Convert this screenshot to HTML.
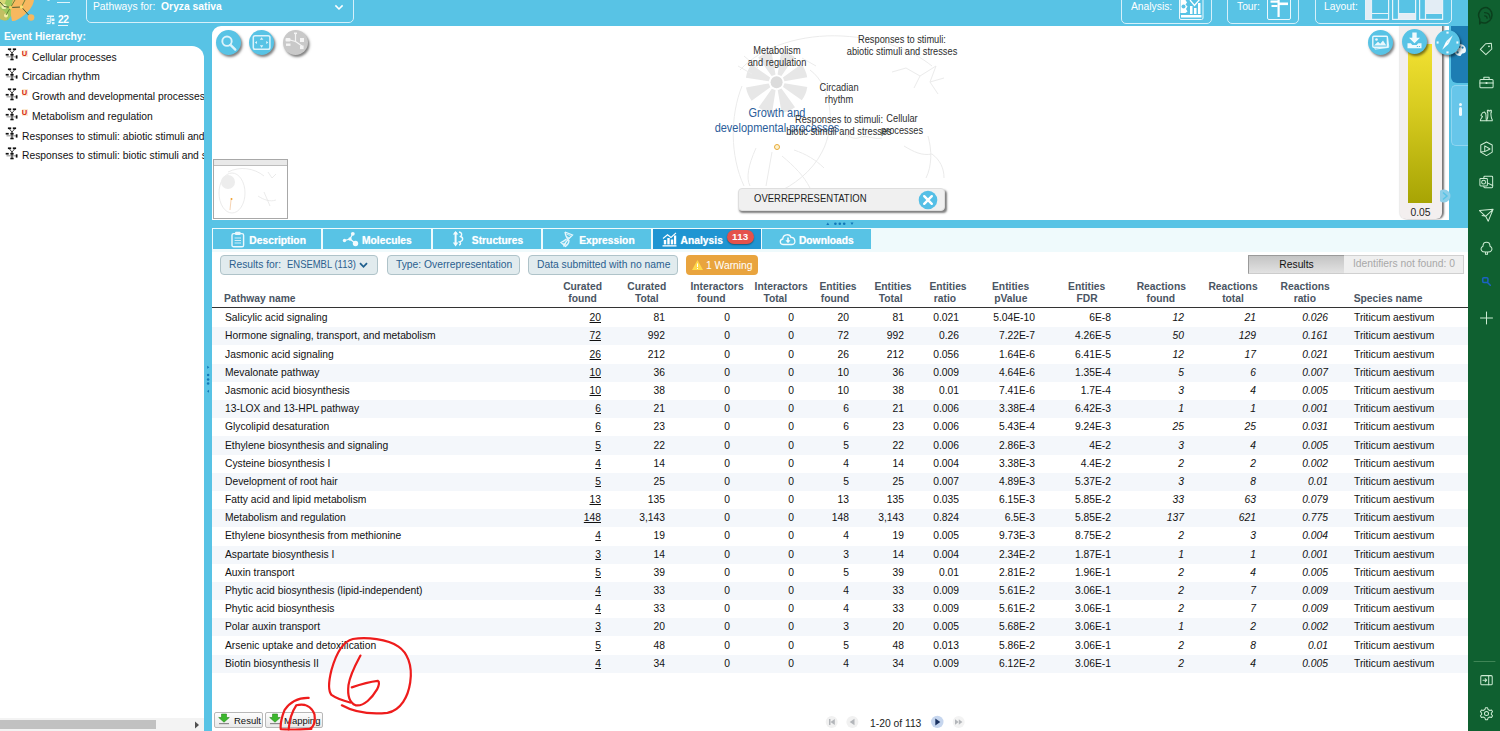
<!DOCTYPE html>
<html><head><meta charset="utf-8"><title>Pathway Browser</title>
<style>
*{box-sizing:border-box;margin:0;padding:0}
html,body{width:1500px;height:731px;overflow:hidden;background:#58C3E5;font-family:"Liberation Sans",Arial,sans-serif;font-size:11px;color:#111}
.abs{position:absolute}
#app{position:relative;width:1500px;height:731px;overflow:hidden;background:#58C3E5}
/* top bar */
.tbox{position:absolute;border:1px solid #d6f0fa;border-radius:5px;color:#fff;font-size:11px}
/* left panel */
#left{position:absolute;left:0;top:46px;width:204px;height:685px;background:#fff;border-top-right-radius:12px;overflow:hidden}
.hi{position:absolute;left:22px;white-space:nowrap;font-size:10.3px;color:#111;line-height:14px}
.hi.u{left:32px}
.ub{position:absolute;left:21.5px;font-size:7.5px;font-weight:bold;color:#d6240f;background:#fdebd3;line-height:7px;height:7px;width:6px;text-align:center;margin-top:-.7px}
/* viewport */
#view{position:absolute;left:212px;top:26px;width:1237px;height:194px;background:#fff;border-top-left-radius:9px;overflow:hidden}
.cbtn{position:absolute;width:25px;height:25px;border-radius:50%;background:#58C3E5;box-shadow:1.5px 2px 2.5px rgba(0,0,0,.5)}
.lbl{position:absolute;font-size:9.25px;line-height:10.8px;text-align:center;color:#2e2e2e;white-space:nowrap;transform:translateX(-50%) scaleY(1.11);transform-origin:50% 0;margin-top:1.3px}
/* bottom panel */
#bottom{position:absolute;left:212px;top:227.5px;width:1256px;height:503.5px;background:#fff}
#tabbar{position:absolute;left:0;top:0.7px;width:1256px;height:23.8px;background:#effafc}
#bottom:before{content:'';position:absolute;left:0;top:0;width:1256px;height:1px;background:#58C3E5}
.tab{position:absolute;top:1.7px;height:20.1px;background:#58C3E5;color:#fff;font-weight:bold;font-size:10.3px;white-space:nowrap}
.tab span{position:absolute;top:6.1px;line-height:12px;text-shadow:0 0 1px rgba(255,255,255,.6)}
.tab.sel{background:#1f95d2}
.pill{position:absolute;top:27.3px;height:19.8px;border:1px solid #afc3c9;border-radius:4px;background:#e1ebee;color:#2b5f8f;font-size:10.3px;line-height:18px;padding:0 0 0 8px;white-space:nowrap}
table{position:absolute;left:0px;top:81.6px;border-collapse:collapse;table-layout:fixed;width:1256px}
td{height:18.2px;font-size:10.3px;line-height:18px;white-space:nowrap;text-align:right;color:#111;overflow:hidden;padding:0}
tr.odd td{background:#f4f7fb}
td.c0{text-align:left;padding-left:13px}
td.c13{text-align:left;padding-left:12px}
td.it{font-style:italic}
td.c1{padding-right:11px}td.c2{padding-right:11px}td.c3{padding-right:16px}td.c4{padding-right:18px}td.c5{padding-right:13px}td.c6{padding-right:14px}td.c7{padding-right:16px}td.c8{padding-right:15px}td.c9{padding-right:14px}td.c10{padding-right:13px}td.c11{padding-right:14px}td.c12{padding-right:14px}
.th.l{transform:none}
.th{position:absolute;font-weight:bold;font-size:10.3px;line-height:12px;color:#4a5563;text-align:center;white-space:nowrap;transform:translateX(-50%)}
.btn{position:absolute;top:484px;height:16.2px;border:1px solid #b8b8b8;border-radius:2px;background:linear-gradient(#fdfdfd,#e9e9e9);font-size:9.5px;color:#111}
.btn span{position:absolute;top:2.5px;line-height:12px}
/* right sidebar */
#side{position:absolute;left:1468px;top:0;width:32px;height:731px;background:#0f6030}
</style></head><body>
<div id="app">

<!-- top bar -->
<svg class="abs" style="left:0;top:0" width="40" height="26" viewBox="0 0 40 26">
  <path d="M0 0 H16 C15 8 12 16 8 20 C5 21 2 20 0 19Z" fill="#9ec95e"/>
  <path d="M0 9 C4 10 8 14 7 20 C4 21 2 20 0 19Z" fill="#c2bf62"/>
  <path d="M13 0 L34 0 C33 7 28 12 23 16 C19 19 15 21.500 12 21 C10 14 11 6 13 0Z" fill="#f7b85f"/>
  <path d="M0 0 H6 C5 4 3 6 0 7Z" fill="#d8d878"/>
  <circle cx="4" cy="6.500" r="2.600" fill="#eef2b0"/><circle cx="6" cy="15.500" r="2" fill="#f4f0a8"/>
  <path d="M0 2 L4 6.500 L10.500 7.500 L21.500 7 L29 15.500" fill="none" stroke="#4d5c30" stroke-width="1"/>
  <path d="M10.500 7.500 L6 15 M15 0 L10.500 7.500 M25 0 L21.500 7" fill="none" stroke="#5a7a30" stroke-width=".9"/>
  <circle cx="10.500" cy="7.500" r="1.700" fill="#f4d060"/><circle cx="21.500" cy="7" r="1.700" fill="#f7e070"/>
  <circle cx="31" cy="17.500" r="3.300" fill="#f7b85f"/>
</svg>
<div class="abs" style="left:57px;top:2px;width:13px;height:1.2px;background:#dff4fb"></div>
<div class="abs" style="left:47px;top:-2px;width:3px;height:3px;border-radius:50%;background:#dff4fb"></div>
<svg class="abs" style="left:46px;top:15px" width="10" height="10" viewBox="0 0 10 10" fill="#e8f7fc"><rect x="1" y="0.500" width="7" height="1.500"/><rect x="0.500" y="3" width="3" height="1.300"/><rect x="5.500" y="3.500" width="3" height="2.500"/><rect x="1" y="5.500" width="3" height="1.300"/><rect x="0.500" y="7.800" width="4" height="1.300"/><rect x="6" y="7.200" width="2.500" height="2"/><rect x="4.200" y="1" width="1" height="7"/></svg>
<div class="abs" style="left:58px;top:13.5px;color:#fff;font-size:10.3px;font-weight:bold;line-height:11px;letter-spacing:-.6px;border-bottom:1.2px solid #e8f7fc;padding-bottom:0px;height:12px">22</div>
<div class="tbox" style="left:86px;top:-8px;width:268px;height:30.5px;"></div>
<div class="abs" style="left:93px;top:1px;color:#fff;font-size:10.3px;line-height:12px;white-space:nowrap">Pathways for:&nbsp; <b>Oryza sativa</b></div>
<svg class="abs" style="left:333.500px;top:3.500px" width="10" height="7.300" viewBox="0 0 11 8"><path d="M1.500 1.500 L5.500 5.500 L9.500 1.500" fill="none" stroke="#fff" stroke-width="1.700"/></svg>
<div class="abs" style="left:4px;top:29.5px;color:#fff;font-size:10.3px;font-weight:bold;line-height:13px;white-space:nowrap">Event Hierarchy:</div>

<div class="tbox" style="left:1121px;top:-8px;width:91px;height:32px;"></div>
<div class="abs" style="left:1131px;top:0.5px;color:#fff;font-size:10.3px;line-height:12px">Analysis:</div>
<svg class="abs" style="left:1179px;top:-3px" width="25" height="24" viewBox="0 0 25 24"><rect x="0.500" y="-3" width="23.500" height="25.500" rx="1.500" fill="none" stroke="#eaf8fd" stroke-width="1"/><rect x="2" y="18" width="20.500" height="2.500" fill="#fff"/><rect x="11" y="9" width="2.500" height="8" fill="#fff"/><rect x="15" y="11" width="2.500" height="6" fill="#fff"/><rect x="19" y="6" width="2.500" height="11" fill="#fff"/><path d="M11 3 L15.500 8.500 L21 2" fill="none" stroke="#fff" stroke-width="1.300"/><path d="M1.500 3 h5 l1.500 2.500 l-1.500 2 l2 2 l-1.500 2.500 l1.500 2.500 l-2 1.500 h-5z" fill="#fff"/><circle cx="4.500" cy="9.500" r="2" fill="#58C3E5"/></svg>
<div class="tbox" style="left:1227px;top:-8px;width:72px;height:32px;"></div>
<div class="abs" style="left:1237px;top:0.5px;color:#fff;font-size:10.3px;line-height:12px">Tour:</div>
<svg class="abs" style="left:1267px;top:-3px" width="25" height="24" viewBox="0 0 25 24"><rect x="0.500" y="-3" width="23" height="25.500" rx="1.500" fill="none" stroke="#eaf8fd" stroke-width="1"/><rect x="10.500" y="0" width="2.200" height="20" fill="#fff"/><rect x="3.500" y="3.500" width="8" height="2.200" fill="#fff"/><rect x="4.500" y="8" width="6" height="2" fill="#fff"/><rect x="12" y="5.500" width="9" height="2.600" fill="#fff"/></svg>
<div class="tbox" style="left:1315px;top:-8px;width:137px;height:32px;"></div>
<div class="abs" style="left:1324px;top:0.5px;color:#fff;font-size:10.3px;line-height:12px">Layout:</div>
<svg class="abs" style="left:1365px;top:0px" width="80" height="21" viewBox="0 0 80 21">
 <g fill="none" stroke="#e6f4fa" stroke-width="1.200">
  <rect x="0.600" y="-3" width="23" height="22.400"/><path d="M6.500 13.500H23.500M6.500 -3V19.400"/>
  <rect x="27.600" y="-3" width="23" height="22.400"/><path d="M33.500 13.500H50.500M33.500 -3V19.400"/>
  <rect x="54.600" y="-3" width="23" height="22.400"/><path d="M60.500 13.500H77.500M60.500 -3V19.400"/>
 </g>
 <rect x="0.600" y="0" width="6" height="19.400" fill="#e3edf5"/>
 <rect x="33.500" y="13.500" width="17" height="6" fill="#e3edf5"/>
 <rect x="60.500" y="0" width="17" height="13.500" fill="#e3edf5"/>
</svg>

<!-- left panel -->
<div id="left">
  <svg class="abs" style="left:4.5px;top:2.4px" width="14" height="13" viewBox="0 0 14 13" fill="#111"><rect x="2.900" y="0.400" width="3.300" height="1.700"/><rect x="7.800" y="0.400" width="3.300" height="1.700"/><path d="M4.500 2 L7 5.100 L9.500 2" fill="none" stroke="#222" stroke-width=".8"/><rect x="6.500" y="4.800" width="1" height="6.500"/><rect x="0.700" y="5.900" width="3" height="1.700"/><rect x="5.350" y="5.900" width="3.300" height="1.700"/><rect x="1.500" y="8.600" width="9.500" height=".6" fill="#444"/><rect x="10.800" y="7.300" width="1.700" height="3.300"/><rect x="5.350" y="10.700" width="3.300" height="1.600"/></svg>
  <div class="ub" style="top:4.5px">U</div>
  <div class="hi u" style="top:4.7px">Cellular processes</div>
  <svg class="abs" style="left:4.5px;top:22.1px" width="14" height="13" viewBox="0 0 14 13" fill="#111"><rect x="2.900" y="0.400" width="3.300" height="1.700"/><rect x="7.800" y="0.400" width="3.300" height="1.700"/><path d="M4.500 2 L7 5.100 L9.500 2" fill="none" stroke="#222" stroke-width=".8"/><rect x="6.500" y="4.800" width="1" height="6.500"/><rect x="0.700" y="5.900" width="3" height="1.700"/><rect x="5.350" y="5.900" width="3.300" height="1.700"/><rect x="1.500" y="8.600" width="9.500" height=".6" fill="#444"/><rect x="10.800" y="7.300" width="1.700" height="3.300"/><rect x="5.350" y="10.700" width="3.300" height="1.600"/></svg>
  <div class="hi" style="top:24.4px">Circadian rhythm</div>
  <svg class="abs" style="left:4.5px;top:41.8px" width="14" height="13" viewBox="0 0 14 13" fill="#111"><rect x="2.900" y="0.400" width="3.300" height="1.700"/><rect x="7.800" y="0.400" width="3.300" height="1.700"/><path d="M4.500 2 L7 5.100 L9.500 2" fill="none" stroke="#222" stroke-width=".8"/><rect x="6.500" y="4.800" width="1" height="6.500"/><rect x="0.700" y="5.900" width="3" height="1.700"/><rect x="5.350" y="5.900" width="3.300" height="1.700"/><rect x="1.500" y="8.600" width="9.500" height=".6" fill="#444"/><rect x="10.800" y="7.300" width="1.700" height="3.300"/><rect x="5.350" y="10.700" width="3.300" height="1.600"/></svg>
  <div class="ub" style="top:43.9px">U</div>
  <div class="hi u" style="top:44.1px">Growth and developmental processes</div>
  <svg class="abs" style="left:4.5px;top:61.6px" width="14" height="13" viewBox="0 0 14 13" fill="#111"><rect x="2.900" y="0.400" width="3.300" height="1.700"/><rect x="7.800" y="0.400" width="3.300" height="1.700"/><path d="M4.500 2 L7 5.100 L9.500 2" fill="none" stroke="#222" stroke-width=".8"/><rect x="6.500" y="4.800" width="1" height="6.500"/><rect x="0.700" y="5.900" width="3" height="1.700"/><rect x="5.350" y="5.900" width="3.300" height="1.700"/><rect x="1.500" y="8.600" width="9.500" height=".6" fill="#444"/><rect x="10.800" y="7.300" width="1.700" height="3.300"/><rect x="5.350" y="10.700" width="3.300" height="1.600"/></svg>
  <div class="ub" style="top:63.7px">U</div>
  <div class="hi u" style="top:63.9px">Metabolism and regulation</div>
  <svg class="abs" style="left:4.5px;top:81.3px" width="14" height="13" viewBox="0 0 14 13" fill="#111"><rect x="2.900" y="0.400" width="3.300" height="1.700"/><rect x="7.800" y="0.400" width="3.300" height="1.700"/><path d="M4.500 2 L7 5.100 L9.500 2" fill="none" stroke="#222" stroke-width=".8"/><rect x="6.500" y="4.800" width="1" height="6.500"/><rect x="0.700" y="5.900" width="3" height="1.700"/><rect x="5.350" y="5.900" width="3.300" height="1.700"/><rect x="1.500" y="8.600" width="9.500" height=".6" fill="#444"/><rect x="10.800" y="7.300" width="1.700" height="3.300"/><rect x="5.350" y="10.700" width="3.300" height="1.600"/></svg>
  <div class="hi" style="top:83.6px">Responses to stimuli: abiotic stimuli and stresses</div>
  <svg class="abs" style="left:4.5px;top:101.0px" width="14" height="13" viewBox="0 0 14 13" fill="#111"><rect x="2.900" y="0.400" width="3.300" height="1.700"/><rect x="7.800" y="0.400" width="3.300" height="1.700"/><path d="M4.500 2 L7 5.100 L9.500 2" fill="none" stroke="#222" stroke-width=".8"/><rect x="6.500" y="4.800" width="1" height="6.500"/><rect x="0.700" y="5.900" width="3" height="1.700"/><rect x="5.350" y="5.900" width="3.300" height="1.700"/><rect x="1.500" y="8.600" width="9.500" height=".6" fill="#444"/><rect x="10.800" y="7.300" width="1.700" height="3.300"/><rect x="5.350" y="10.700" width="3.300" height="1.600"/></svg>
  <div class="hi" style="top:103.3px">Responses to stimuli: biotic stimuli and stresses</div>
  <div class="abs" style="left:0;top:672.3px;width:204px;height:12.7px;background:#f3f3f3"></div>
  <div class="abs" style="left:0;top:674.2px;width:156px;height:9.3px;background:#c1c1c1"></div>
  <svg class="abs" style="left:194px;top:675px" width="6" height="8" viewBox="0 0 6 8"><path d="M1 0.500 L5 4 L1 7.500Z" fill="#505050"/></svg>
</div>

<!-- viewport -->
<div id="view">
  <!-- faint background sketch -->
  <svg class="abs" style="left:470px;top:0" width="520" height="194" viewBox="0 0 520 194" fill="none" stroke="#ebebeb" stroke-width="1">
    <path d="M102.5 57.3 L125.3 60.9 A31 31 0 0 1 119.8 74.3 L101.0 61.1Z M99.5 62.6 L113.0 81.2 A31 31 0 0 1 99.7 86.9 L95.7 64.2Z M93.6 64.2 L90.0 87.0 A31 31 0 0 1 76.6 81.5 L89.8 62.7Z M88.3 61.2 L69.7 74.7 A31 31 0 0 1 64.0 61.4 L86.7 57.4Z M86.7 55.3 L63.9 51.7 A31 31 0 0 1 69.4 38.3 L88.2 51.5Z M89.7 50.0 L76.2 31.4 A31 31 0 0 1 89.5 25.7 L93.5 48.4Z M95.6 48.4 L99.2 25.6 A31 31 0 0 1 112.6 31.1 L99.4 49.9Z M100.9 51.4 L119.5 37.9 A31 31 0 0 1 125.2 51.2 L102.5 55.2Z" fill="#e7e7e7" stroke="none"/>
    <circle cx="94.6" cy="56.3" r="6" fill="#dcdcdc" stroke="none"/>
    <path d="M60 60 C48 90 48 130 62 160 M58 44 C80 20 120 8 160 10 C200 12 230 24 250 40"/>
    <path d="M128 44 C150 60 154 100 140 126 C130 146 110 160 96 166"/>
    <path d="M56 40 L70 48 M62 30 L76 42 M120 32 L134 40"/>
    <path d="M74 122 C66 140 64 152 68 160 M100 130 C112 140 122 150 128 162 M90 126 L84 160 M112 124 C124 128 134 134 142 142"/>
    <path d="M150 100 C164 108 170 114 176 112 M176 112 C184 108 192 114 200 112"/>
    <path d="M224 42 L238 50 L254 40 L248 56 L262 52 M238 50 L232 62 M248 56 L256 68 M210 46 L224 42"/>
    <path d="M222 120 C232 126 240 130 250 128 M250 128 C258 134 262 142 262 152 M246 110 C250 124 250 140 244 152"/>
  </svg>
  <div class="cbtn" style="left:4px;top:4px"></div>
  <svg class="abs" style="left:4px;top:4px" width="25" height="25" viewBox="0 0 25 25" fill="none" stroke="#dcf3fb"><circle cx="11" cy="11.200" r="4.700" stroke-width="1.900"/><path d="M14.500 14.800 L19.300 19.600" stroke-width="2.400" stroke-linecap="round"/></svg>
  <div class="cbtn" style="left:37.3px;top:4px"></div>
  <svg class="abs" style="left:37.3px;top:4px" width="25" height="25" viewBox="0 0 25 25"><rect x="4.300" y="5.800" width="16.600" height="13.400" rx="1.800" fill="none" stroke="#dcf3fb" stroke-width="1.500"/><g fill="#dcf3fb"><path d="M12.600 7.300 L14.300 9.800 H10.900Z"/><path d="M12.600 17.800 L14.300 15.300 H10.900Z"/><path d="M5.800 12.500 L8 10.900 V14.100Z"/><path d="M19.400 12.500 L17.200 10.900 V14.100Z"/></g></svg>
  <div class="cbtn" style="left:70.8px;top:4px;background:#c9c9c9"></div>
  <svg class="abs" style="left:70.8px;top:4px" width="25" height="25" viewBox="0 0 25 25" fill="#f4f4f4" stroke="#f4f4f4"><path d="M7 10 L12.500 11.500 L12.500 4 M12.500 11.500 L19 16" fill="none" stroke-width="1.200"/><rect x="11" y="2.500" width="3" height="1.600" stroke="none"/><rect x="2.500" y="8" width="5" height="3.600" rx="1" stroke="none"/><rect x="3" y="13.500" width="4.500" height="2.400" stroke="none"/><rect x="17" y="8" width="4" height="4" stroke="none"/><rect x="17" y="15.500" width="3.600" height="3.600" stroke="none"/></svg>

  <div class="lbl" style="left:565px;top:18px">Metabolism<br>and regulation</div>
  <div class="lbl" style="left:690px;top:7px">Responses to stimuli:<br>abiotic stimuli and stresses</div>
  <div class="lbl" style="left:627px;top:55px">Circadian<br>rhythm</div>
  <div class="lbl" style="left:565px;top:79px;font-size:11px;line-height:13.06px;color:#2a5d9a">Growth and<br>developmental processes</div>
  <div class="lbl" style="left:627px;top:87px">Responses to stimuli:<br>biotic stimuli and stresses</div>
  <div class="lbl" style="left:690px;top:86px">Cellular<br>processes</div>
  <div class="abs" style="left:561.5px;top:118px;width:6px;height:6px;border-radius:50%;border:1.300px solid #e8aa3a;background:#fdf3d0"></div>

  <!-- minimap -->
  <div class="abs" style="left:0.5px;top:133px;width:75px;height:60px;border:1px solid #a8a8a8;background:#fff"></div>
  <div class="abs" style="left:1.5px;top:134px;width:73px;height:5.500px;background:#e9e9e9;border-bottom:1px solid #bdbdbd"></div>
  <svg class="abs" style="left:2px;top:140px" width="72" height="52" viewBox="0 0 72 52" fill="none" stroke="#e6e6e6" stroke-width=".8"><ellipse cx="18" cy="27" rx="13" ry="20"/><circle cx="14" cy="16" r="7" fill="#ededed" stroke="none"/><path d="M14 6 C26 0 40 2 50 10 M44 30 C50 34 56 36 62 34 M54 6 L58 12 L62 8 M50 26 L56 40"/><circle cx="17.500" cy="33" r="1" fill="#f0a030" stroke="none"/><path d="M17 34 L16 44" stroke="#f4c8a0"/></svg>

  <!-- overrepresentation box -->
  <div class="abs" style="left:525.5px;top:162.300px;width:207px;height:22.500px;border-radius:4px;background:#f0f0f0;border:1px solid #dedede;box-shadow:1.500px 2px 2px rgba(0,0,0,.5)"></div>
  <div class="abs" style="left:541.5px;top:167px;font-size:10.300px;line-height:12px;color:#222;white-space:nowrap;transform:scaleX(.922);transform-origin:0 50%">OVERREPRESENTATION</div>
  <svg class="abs" style="left:705.5px;top:163.500px" width="20" height="20" viewBox="0 0 20 20"><circle cx="10" cy="10" r="9.300" fill="#55bfe6"/><path d="M6.200 6.200 L13.800 13.800 M13.800 6.200 L6.200 13.800" stroke="#fff" stroke-width="2.400" stroke-linecap="round"/></svg>

  <!-- legend -->
  <div class="abs" style="left:1187.5px;top:-6px;width:42px;height:199px;border-radius:6px;background:#f3efef;box-shadow:2px 0 2px rgba(0,0,0,.55), -1px 0 1px rgba(0,0,0,.08)"></div>
  <div class="abs" style="left:1196px;top:18px;width:24px;height:159px;background:linear-gradient(#f2e132,#d8cc20 40%,#a7a404)"></div>
  <div class="abs" style="left:1187.5px;top:181px;width:42px;text-align:center;font-size:10.300px;line-height:12px;color:#222">0.05</div>

  <!-- right buttons -->
  <div class="cbtn" style="left:1156px;top:4px"></div>
  <svg class="abs" style="left:1156px;top:4px" width="25" height="25" viewBox="0 0 25 25"><rect x="6.200" y="7.800" width="14" height="10.500" rx="1" transform="rotate(-8 13 13)" fill="#58C3E5" stroke="#dcf3fb" stroke-width="1.100"/><rect x="4.800" y="6.200" width="14.600" height="11" rx="1" fill="#58C3E5" stroke="#eaf8fd" stroke-width="1.400"/><circle cx="8.500" cy="9.500" r="1.300" fill="#eaf8fd"/><path d="M6 15.600 L10 11.800 L12.200 13.800 L15 10.600 L18.300 15.600Z" fill="#eaf8fd"/></svg>
  <div class="cbtn" style="left:1189.5px;top:3.300px"></div>
  <svg class="abs" style="left:1189.5px;top:3.300px" width="25" height="25" viewBox="0 0 25 25" fill="#f0fafd"><path d="M10.300 3.500 h4.400 v5.300 h3.300 L12.500 14.300 L7 8.800 h3.300z"/><path d="M5.500 14.200 h3.300 l1.500 1.700 h4.400 l1.500 -1.700 h3.300 v5 h-14z"/><rect x="14.800" y="17" width="1.200" height="1" fill="#58C3E5"/><rect x="16.800" y="17" width="1.200" height="1" fill="#58C3E5"/></svg>
</div>

<!-- right strip -->
<div class="abs" style="left:1451px;top:26px;width:17px;height:57px;background:#1d7db3;border-bottom-left-radius:6px"></div>
<div class="abs" style="left:1451px;top:84.500px;width:18px;height:61px;background:#67c6ea;border:1px solid #8fd5f0;border-right:none;border-radius:5px 0 0 5px"></div>
<div class="abs" style="left:1458.5px;top:102.500px;width:3px;height:3px;border-radius:50%;background:#f0fafd"></div>
<div class="abs" style="left:1458.5px;top:107px;width:3px;height:8.500px;border-radius:1.500px;background:#f0fafd"></div>
<svg class="abs" style="left:1452px;top:42px" width="16" height="16" viewBox="0 0 16 16"><path d="M8 2 A6 6 0 1 0 8 14 C9.500 14 9 12.500 10 11.800 C11 11 14 12 14 8 A6 6 0 0 0 8 2Z" fill="#eef8fc"/><circle cx="5" cy="7" r="1.100" fill="#1d7db3"/><circle cx="7.500" cy="4.800" r="1.100" fill="#1d7db3"/><circle cx="10.600" cy="5.600" r="1.100" fill="#1d7db3"/><circle cx="5.600" cy="10.400" r="1.100" fill="#1d7db3"/></svg>
<div class="cbtn" style="left:1434.5px;top:30px"></div>
<svg class="abs" style="left:1434.5px;top:30px" width="25" height="25" viewBox="0 0 25 25" fill="#eef9fd"><path d="M17.800 5.200 L13.800 13.800 L11.200 11.200Z"/><path d="M7.200 19.800 L11.200 11.200 L13.800 13.800Z" fill="#ffffff"/><rect x="11.400" y="1.600" width="2.200" height="2" /><rect x="11.400" y="21.400" width="2.200" height="2"/><rect x="1.600" y="11.400" width="2" height="2.200"/><rect x="21.400" y="11.400" width="2" height="2.200"/></svg>
<!-- small expand arrow -->
<svg class="abs" style="left:1440px;top:189px" width="12" height="14" viewBox="0 0 12 14"><circle cx="4" cy="7" r="6.500" fill="#8ecfe8"/><path d="M3 3.500 L7 7 L3 10.500" fill="none" stroke="#58C3E5" stroke-width="1.500"/></svg>
<!-- divider handles -->
<svg class="abs" style="left:822px;top:220px" width="36" height="8" viewBox="0 0 36 8" fill="#1278b8"><path d="M4.300 5 L5.800 2.600 L7.300 5Z"/><circle cx="13.400" cy="3.700" r="1.300"/><circle cx="17.800" cy="3.700" r="1.300"/><circle cx="22.200" cy="3.700" r="1.300"/><path d="M28.500 2.600 L31.500 2.600 L30 5Z"/></svg>
<svg class="abs" style="left:204px;top:362px" width="8" height="34" viewBox="0 0 8 34" fill="#1278b8"><path d="M3.200 3.800 L5.400 5.300 L3.200 6.800Z"/><circle cx="4.100" cy="12.900" r="1.250"/><circle cx="4.100" cy="17.400" r="1.250"/><circle cx="4.100" cy="21.500" r="1.250"/><path d="M5 27.800 L3 29.300 L5 30.800Z"/></svg>

<!-- bottom -->
<div id="bottom">
  <div id="tabbar"></div>
  <div class="tab" style="left:1.3px;width:108px"><span style="left:36px">Description</span>
    <svg class="abs" style="left:17.5px;top:1.500px" width="14" height="17" viewBox="0 0 14 17"><rect x="1" y="2.600" width="11.600" height="13.200" rx="1.600" fill="none" stroke="#eaf8fd" stroke-width="1.400"/><rect x="4" y="0.800" width="5.600" height="3.200" rx="1" fill="#eaf8fd"/><path d="M3.600 7h6.400M3.600 9.500h6.400M3.600 12h6.400" stroke="#cfeefa" stroke-width="1"/></svg></div>
  <div class="tab" style="left:111px;width:108px"><span style="left:39px">Molecules</span>
    <svg class="abs" style="left:19px;top:2px" width="18" height="16" viewBox="0 0 18 16" fill="#f2fbfe" stroke="#f2fbfe"><path d="M2.500 9.500 L8 8 L10.800 2.800 M8 8 L13.500 12.500" stroke-width="1.200" fill="none"/><circle cx="2.500" cy="9.500" r="1.700" stroke="none"/><circle cx="8" cy="8" r="1.700" stroke="none"/><circle cx="10.800" cy="2.800" r="1.900" stroke="none"/><circle cx="13.500" cy="12.500" r="2.700" stroke="none"/></svg></div>
  <div class="tab" style="left:220.8px;width:108px"><span style="left:39px">Structures</span>
    <svg class="abs" style="left:19.5px;top:1px" width="13" height="18" viewBox="0 0 13 18" fill="none" stroke="#f2fbfe"><path d="M3.600 2 V14" stroke-width="2"/><path d="M0.800 4.500 L3.600 1 L6.400 4.500Z M0.800 12.500 L3.600 16.500 L6.400 12.500Z" fill="#f2fbfe" stroke="none"/><path d="M7 2 C10 2.500 10.500 5 8.500 6.500 C11.500 7.500 11.500 11 7.500 12 C9 13 9 14.500 7 15" stroke-width="1.400"/></svg></div>
  <div class="tab" style="left:330.7px;width:108px"><span style="left:36.5px">Expression</span>
    <svg class="abs" style="left:17px;top:1.500px" width="15" height="17" viewBox="0 0 15 17" fill="none" stroke="#e6f6fc" stroke-width="1.300"><path d="M5 1 L12.500 4 C10 7 6 9 3.500 15.500 M5 1 C5.500 5 7 7.500 9 9.500 C9 12 7.500 14 5.500 15.500 L1 11.500 C3 10.500 5 9.500 6.500 8"/><path d="M6.500 3 L10.500 4.700 M3 12 L6.500 13.800 M6.200 5.400 L9.200 6.800" stroke-width=".8"/></svg></div>
  <div class="tab sel" style="left:440.5px;width:108px"><span style="left:28px">Analysis</span>
    <svg class="abs" style="left:9px;top:2.500px" width="15" height="15" viewBox="0 0 15 15" fill="#fff"><rect x="0.500" y="13.200" width="14" height="1.300"/><rect x="1.800" y="8" width="2.400" height="4.400"/><rect x="5.300" y="6" width="2.400" height="6.400"/><rect x="8.800" y="7.500" width="2.400" height="4.900"/><rect x="12" y="3.500" width="2.200" height="8.900"/><path d="M1 6.500 L5.500 2.800 L9 5.500 L14 0.800" fill="none" stroke="#fff" stroke-width="1.100"/></svg>
    <div class="abs" style="left:74.5px;top:0.500px;width:26.500px;height:14.500px;border-radius:7px;background:#e4524b;box-shadow:0 1px 1.500px rgba(0,0,0,.4);color:#fff;font-size:9.800px;font-weight:bold;line-height:14px;text-align:center;letter-spacing:.2px">113</div></div>
  <div class="tab" style="left:550.4px;width:108.400px"><span style="left:36.5px">Downloads</span>
    <svg class="abs" style="left:16.5px;top:4px" width="18" height="13" viewBox="0 0 18 13" fill="none" stroke="#f2fbfe" stroke-width="1.300"><path d="M4.500 11.500 C0.500 11.500 0.200 6.500 3.800 6 C3.800 1.500 10.500 0 12 4.500 C16.500 4 17.500 11.500 13 11.500Z"/><path d="M9 4.500 V8" stroke-width="1.600"/><path d="M6.500 7.300 H11.500 L9 10.200Z" fill="#f2fbfe" stroke="none"/></svg></div>

  <div class="pill" style="left:8px;width:158px">Results for:&nbsp; <span style="display:inline-block;transform:scaleX(.918);transform-origin:0 50%">ENSEMBL (113)</span><svg style="position:absolute;left:138px;top:6px" width="9" height="7" viewBox="0 0 9 7"><path d="M1 1.2 L4.5 4.8 L8 1.2" fill="none" stroke="#1e5f8e" stroke-width="1.8"/></svg></div>
  <div class="pill" style="left:175px;width:133px">Type: Overrepresentation</div>
  <div class="pill" style="left:316px;width:150px">Data submitted with no name</div>
  <div class="abs" style="left:474px;top:27px;width:71.500px;height:20.600px;border-radius:4px;background:#e9a43e;color:#fff;font-size:10.3px;line-height:21px;padding-left:20px;white-space:nowrap">1 Warning<svg style="position:absolute;left:6px;top:5px" width="11" height="10" viewBox="0 0 11 10"><path d="M5.5 0 L11 10 L0 10 Z" fill="#ffd84a"/><rect x="5" y="3.5" width="1" height="3.5" fill="#fff"/><rect x="5" y="8" width="1" height="1" fill="#fff"/></svg></div>
  <div class="abs" style="left:1036px;top:27.300px;width:216px;height:19.400px;background:#efefef;border:1px solid #d0d0d0"></div>
  <div class="abs" style="left:1036px;top:27.300px;width:96px;height:19.400px;background:linear-gradient(#c4c4c4,#e2e2e2);border:1px solid #9a9a9a;border-right:none;border-bottom-color:#ccc;color:#111;font-size:10.3px;line-height:18px;text-align:center">Results</div>
  <div class="abs" style="left:1141px;top:27.300px;height:19px;color:#a8a8a8;font-size:10.3px;line-height:18px;white-space:nowrap">Identifiers not found: 0</div>
  <div class="th l" style="left:12px;top:65.8px">Pathway name</div>
  <div class="th" style="left:370.6px;top:53.7px">Curated</div>
  <div class="th" style="left:370.6px;top:65.8px">found</div>
  <div class="th" style="left:434.8px;top:53.7px">Curated</div>
  <div class="th" style="left:434.8px;top:65.8px">Total</div>
  <div class="th" style="left:505px;top:53.7px">Interactors</div>
  <div class="th" style="left:499.3px;top:65.8px">found</div>
  <div class="th" style="left:569.2px;top:53.7px">Interactors</div>
  <div class="th" style="left:563.3px;top:65.8px">Total</div>
  <div class="th" style="left:626px;top:53.7px">Entities</div>
  <div class="th" style="left:623px;top:65.8px">found</div>
  <div class="th" style="left:681px;top:53.7px">Entities</div>
  <div class="th" style="left:678.6px;top:65.8px">Total</div>
  <div class="th" style="left:736px;top:53.7px">Entities</div>
  <div class="th" style="left:733px;top:65.8px">ratio</div>
  <div class="th" style="left:798.6px;top:53.7px">Entities</div>
  <div class="th" style="left:798.8px;top:65.8px">pValue</div>
  <div class="th" style="left:874.7px;top:53.7px">Entities</div>
  <div class="th" style="left:875px;top:65.8px">FDR</div>
  <div class="th" style="left:949.3px;top:53.7px">Reactions</div>
  <div class="th" style="left:948.8px;top:65.8px">found</div>
  <div class="th" style="left:1021px;top:53.7px">Reactions</div>
  <div class="th" style="left:1021px;top:65.8px">total</div>
  <div class="th" style="left:1093.2px;top:53.7px">Reactions</div>
  <div class="th" style="left:1092.8px;top:65.8px">ratio</div>
  <div class="th l" style="left:1141.7px;top:65.8px">Species name</div>
  <div class="abs" style="left:0px;top:79.4px;width:1256px;height:1.5px;background:#333"></div>
  <table>
  <colgroup>
   <col style="width:341px"><col style="width:59px"><col style="width:64px"><col style="width:70px"><col style="width:66px"><col style="width:50px"><col style="width:56px"><col style="width:57px"><col style="width:75px"><col style="width:75px"><col style="width:72px"><col style="width:73px"><col style="width:72px"><col style="width:126px">
  </colgroup>
<tr class="even"><td class="c0">Salicylic acid signaling</td><td class="c1"><u>20</u></td><td class="c2">81</td><td class="c3">0</td><td class="c4">0</td><td class="c5">20</td><td class="c6">81</td><td class="c7">0.021</td><td class="c8">5.04E-10</td><td class="c9">6E-8</td><td class="c10 it">12</td><td class="c11 it">21</td><td class="c12 it">0.026</td><td class="c13">Triticum aestivum</td></tr>
<tr class="odd"><td class="c0">Hormone signaling, transport, and metabolism</td><td class="c1"><u>72</u></td><td class="c2">992</td><td class="c3">0</td><td class="c4">0</td><td class="c5">72</td><td class="c6">992</td><td class="c7">0.26</td><td class="c8">7.22E-7</td><td class="c9">4.26E-5</td><td class="c10 it">50</td><td class="c11 it">129</td><td class="c12 it">0.161</td><td class="c13">Triticum aestivum</td></tr>
<tr class="even"><td class="c0">Jasmonic acid signaling</td><td class="c1"><u>26</u></td><td class="c2">212</td><td class="c3">0</td><td class="c4">0</td><td class="c5">26</td><td class="c6">212</td><td class="c7">0.056</td><td class="c8">1.64E-6</td><td class="c9">6.41E-5</td><td class="c10 it">12</td><td class="c11 it">17</td><td class="c12 it">0.021</td><td class="c13">Triticum aestivum</td></tr>
<tr class="odd"><td class="c0">Mevalonate pathway</td><td class="c1"><u>10</u></td><td class="c2">36</td><td class="c3">0</td><td class="c4">0</td><td class="c5">10</td><td class="c6">36</td><td class="c7">0.009</td><td class="c8">4.64E-6</td><td class="c9">1.35E-4</td><td class="c10 it">5</td><td class="c11 it">6</td><td class="c12 it">0.007</td><td class="c13">Triticum aestivum</td></tr>
<tr class="even"><td class="c0">Jasmonic acid biosynthesis</td><td class="c1"><u>10</u></td><td class="c2">38</td><td class="c3">0</td><td class="c4">0</td><td class="c5">10</td><td class="c6">38</td><td class="c7">0.01</td><td class="c8">7.41E-6</td><td class="c9">1.7E-4</td><td class="c10 it">3</td><td class="c11 it">4</td><td class="c12 it">0.005</td><td class="c13">Triticum aestivum</td></tr>
<tr class="odd"><td class="c0">13-LOX and 13-HPL pathway</td><td class="c1"><u>6</u></td><td class="c2">21</td><td class="c3">0</td><td class="c4">0</td><td class="c5">6</td><td class="c6">21</td><td class="c7">0.006</td><td class="c8">3.38E-4</td><td class="c9">6.42E-3</td><td class="c10 it">1</td><td class="c11 it">1</td><td class="c12 it">0.001</td><td class="c13">Triticum aestivum</td></tr>
<tr class="even"><td class="c0">Glycolipid desaturation</td><td class="c1"><u>6</u></td><td class="c2">23</td><td class="c3">0</td><td class="c4">0</td><td class="c5">6</td><td class="c6">23</td><td class="c7">0.006</td><td class="c8">5.43E-4</td><td class="c9">9.24E-3</td><td class="c10 it">25</td><td class="c11 it">25</td><td class="c12 it">0.031</td><td class="c13">Triticum aestivum</td></tr>
<tr class="odd"><td class="c0">Ethylene biosynthesis and signaling</td><td class="c1"><u>5</u></td><td class="c2">22</td><td class="c3">0</td><td class="c4">0</td><td class="c5">5</td><td class="c6">22</td><td class="c7">0.006</td><td class="c8">2.86E-3</td><td class="c9">4E-2</td><td class="c10 it">3</td><td class="c11 it">4</td><td class="c12 it">0.005</td><td class="c13">Triticum aestivum</td></tr>
<tr class="even"><td class="c0">Cysteine biosynthesis I</td><td class="c1"><u>4</u></td><td class="c2">14</td><td class="c3">0</td><td class="c4">0</td><td class="c5">4</td><td class="c6">14</td><td class="c7">0.004</td><td class="c8">3.38E-3</td><td class="c9">4.4E-2</td><td class="c10 it">2</td><td class="c11 it">2</td><td class="c12 it">0.002</td><td class="c13">Triticum aestivum</td></tr>
<tr class="odd"><td class="c0">Development of root hair</td><td class="c1"><u>5</u></td><td class="c2">25</td><td class="c3">0</td><td class="c4">0</td><td class="c5">5</td><td class="c6">25</td><td class="c7">0.007</td><td class="c8">4.89E-3</td><td class="c9">5.37E-2</td><td class="c10 it">3</td><td class="c11 it">8</td><td class="c12 it">0.01</td><td class="c13">Triticum aestivum</td></tr>
<tr class="even"><td class="c0">Fatty acid and lipid metabolism</td><td class="c1"><u>13</u></td><td class="c2">135</td><td class="c3">0</td><td class="c4">0</td><td class="c5">13</td><td class="c6">135</td><td class="c7">0.035</td><td class="c8">6.15E-3</td><td class="c9">5.85E-2</td><td class="c10 it">33</td><td class="c11 it">63</td><td class="c12 it">0.079</td><td class="c13">Triticum aestivum</td></tr>
<tr class="odd"><td class="c0">Metabolism and regulation</td><td class="c1"><u>148</u></td><td class="c2">3,143</td><td class="c3">0</td><td class="c4">0</td><td class="c5">148</td><td class="c6">3,143</td><td class="c7">0.824</td><td class="c8">6.5E-3</td><td class="c9">5.85E-2</td><td class="c10 it">137</td><td class="c11 it">621</td><td class="c12 it">0.775</td><td class="c13">Triticum aestivum</td></tr>
<tr class="even"><td class="c0">Ethylene biosynthesis from methionine</td><td class="c1"><u>4</u></td><td class="c2">19</td><td class="c3">0</td><td class="c4">0</td><td class="c5">4</td><td class="c6">19</td><td class="c7">0.005</td><td class="c8">9.73E-3</td><td class="c9">8.75E-2</td><td class="c10 it">2</td><td class="c11 it">3</td><td class="c12 it">0.004</td><td class="c13">Triticum aestivum</td></tr>
<tr class="odd"><td class="c0">Aspartate biosynthesis I</td><td class="c1"><u>3</u></td><td class="c2">14</td><td class="c3">0</td><td class="c4">0</td><td class="c5">3</td><td class="c6">14</td><td class="c7">0.004</td><td class="c8">2.34E-2</td><td class="c9">1.87E-1</td><td class="c10 it">1</td><td class="c11 it">1</td><td class="c12 it">0.001</td><td class="c13">Triticum aestivum</td></tr>
<tr class="even"><td class="c0">Auxin transport</td><td class="c1"><u>5</u></td><td class="c2">39</td><td class="c3">0</td><td class="c4">0</td><td class="c5">5</td><td class="c6">39</td><td class="c7">0.01</td><td class="c8">2.81E-2</td><td class="c9">1.96E-1</td><td class="c10 it">2</td><td class="c11 it">4</td><td class="c12 it">0.005</td><td class="c13">Triticum aestivum</td></tr>
<tr class="odd"><td class="c0">Phytic acid biosynthesis (lipid-independent)</td><td class="c1"><u>4</u></td><td class="c2">33</td><td class="c3">0</td><td class="c4">0</td><td class="c5">4</td><td class="c6">33</td><td class="c7">0.009</td><td class="c8">5.61E-2</td><td class="c9">3.06E-1</td><td class="c10 it">2</td><td class="c11 it">7</td><td class="c12 it">0.009</td><td class="c13">Triticum aestivum</td></tr>
<tr class="even"><td class="c0">Phytic acid biosynthesis</td><td class="c1"><u>4</u></td><td class="c2">33</td><td class="c3">0</td><td class="c4">0</td><td class="c5">4</td><td class="c6">33</td><td class="c7">0.009</td><td class="c8">5.61E-2</td><td class="c9">3.06E-1</td><td class="c10 it">2</td><td class="c11 it">7</td><td class="c12 it">0.009</td><td class="c13">Triticum aestivum</td></tr>
<tr class="odd"><td class="c0">Polar auxin transport</td><td class="c1"><u>3</u></td><td class="c2">20</td><td class="c3">0</td><td class="c4">0</td><td class="c5">3</td><td class="c6">20</td><td class="c7">0.005</td><td class="c8">5.68E-2</td><td class="c9">3.06E-1</td><td class="c10 it">1</td><td class="c11 it">2</td><td class="c12 it">0.002</td><td class="c13">Triticum aestivum</td></tr>
<tr class="even"><td class="c0">Arsenic uptake and detoxification</td><td class="c1"><u>5</u></td><td class="c2">48</td><td class="c3">0</td><td class="c4">0</td><td class="c5">5</td><td class="c6">48</td><td class="c7">0.013</td><td class="c8">5.86E-2</td><td class="c9">3.06E-1</td><td class="c10 it">2</td><td class="c11 it">8</td><td class="c12 it">0.01</td><td class="c13">Triticum aestivum</td></tr>
<tr class="odd"><td class="c0">Biotin biosynthesis II</td><td class="c1"><u>4</u></td><td class="c2">34</td><td class="c3">0</td><td class="c4">0</td><td class="c5">4</td><td class="c6">34</td><td class="c7">0.009</td><td class="c8">6.12E-2</td><td class="c9">3.06E-1</td><td class="c10 it">2</td><td class="c11 it">4</td><td class="c12 it">0.005</td><td class="c13">Triticum aestivum</td></tr>
  </table>

  <div class="btn" style="left:2px;width:49px"><span style="left:19px">Result</span></div>
  <div class="btn" style="left:53px;width:58px"><span style="left:18px">Mapping</span></div>
  <svg class="abs" style="left:6px;top:485px" width="12" height="12" viewBox="0 0 12 12"><path d="M3.5 1h5v3.5h2.8L6 9.2 0.7 4.5h2.8z" fill="#3bb82c" stroke="#2a8a1e" stroke-width=".6"/><rect x="1" y="10" width="10" height="1.2" fill="#8a8a8a"/></svg>
  <svg class="abs" style="left:57px;top:485px" width="12" height="12" viewBox="0 0 12 12"><path d="M3.5 1h5v3.5h2.8L6 9.2 0.7 4.5h2.8z" fill="#3bb82c" stroke="#2a8a1e" stroke-width=".6"/><rect x="1" y="10" width="10" height="1.2" fill="#8a8a8a"/></svg>
  <div class="abs" style="left:658px;top:490.3px;font-size:10.3px;line-height:12px;color:#222;white-space:nowrap">1-20 of 113</div>
  <svg class="abs" style="left:612px;top:485px" width="145" height="18" viewBox="0 0 145 18">
    <circle cx="7.700" cy="9" r="6" fill="#f1f1f1"/><circle cx="28.400" cy="9" r="6" fill="#f1f1f1"/><circle cx="134.700" cy="9" r="6" fill="#f3f3f3"/>
    <circle cx="113.300" cy="8.900" r="6.200" fill="#c6d6ee"/>
    <g fill="#b3b6ba"><rect x="5" y="6" width="1.500" height="6"/><path d="M10.800 6v6l-4.300-3z"/><path d="M30.500 5.800v6.400l-4.800-3.200z"/><path d="M131 6.200v5.600l3.600-2.800z"/><path d="M134.800 6.200v5.600l3.600-2.800z"/></g>
    <path d="M111.300 5.400v7l5-3.500z" fill="#1b3260"/>
  </svg>
  <svg class="abs" style="left:58px;top:402.5px" width="150" height="101" viewBox="0 0 1086 731" fill="none" stroke="#ee1c1c" stroke-width="16" stroke-linecap="round" stroke-linejoin="round">
    <path d="M520 545 C600 590 700 615 850 600 C950 580 1000 480 1015 380 C1035 250 990 160 930 120 C850 65 700 50 600 65 C520 85 470 200 445 290 C425 370 420 440 445 470 C480 495 540 515 580 525"/>
    <path d="M655 185 C620 250 580 320 568 400 C560 470 575 525 620 545 C680 555 740 490 775 430 C790 400 795 375 780 368 C720 375 650 395 592 415"/>
    <path d="M280 492 C220 490 150 515 105 580 C85 630 75 690 78 718 C130 722 250 718 300 715"/>
    <path d="M190 545 C250 530 300 550 322 610 C330 660 315 700 290 715 M190 545 C160 590 140 650 135 720"/>
  </svg>
</div>

<div id="side">
 <svg class="abs" style="left:0;top:0" width="32" height="731" viewBox="0 0 32 731" fill="none" stroke="#cdebd3" stroke-width="1.150" stroke-linejoin="round" stroke-linecap="round">
  <g transform="translate(19.3,15.8) scale(1.08) translate(-18.5,-15.5)" stroke="#0b3f1d" stroke-width="1.400"><path d="M18.500 8 A7 7 0 1 1 12.500 21.500 L11.500 23 L11.500 18.500 A7 7 0 0 1 18.500 8Z"/><path d="M16 12.500 C19 12.500 21 14.500 21 17.500 M16 15.500 C17.500 15.500 18.300 16.300 18.300 17.800" stroke-width="1.200"/></g>
  <g transform="translate(18.5,49) scale(0.88) translate(-18.5,-49)"><path d="M17.500 43 L24 42.500 L24.500 49 L17.800 55.500 L11.500 49.500Z"/><circle cx="21.300" cy="46" r="1" fill="#d3efd8" stroke="none"/></g>
  <g transform="translate(18.5,82.5) scale(0.88) translate(-18.5,-82.5)"><rect x="11" y="79" width="15" height="9.500" rx="1.200"/><path d="M15.500 79 V76.500 H21.500 V79 M11 83 H26"/><rect x="17.500" y="82" width="2" height="2.200" fill="#d3efd8" stroke="none"/></g>
  <g transform="translate(18.5,115.5) scale(0.88) translate(-18.5,-115.5)"><path d="M19 121.500 V120 C20.500 118 20 114 20 112 H19.500 V109.500 H21 V110.500 H22.500 V109.500 H24 V112 H23.500 C23.500 114 23.500 118 25 120 V121.500Z"/><path d="M11.500 121.500 C11.500 119 13.500 118 14 116.500 C12.500 116.500 12 115.500 12.500 114.500 C13.500 112.500 14 111.500 16 111.500 L17.500 113 C18.500 115.500 17.500 118 18.500 121.500Z"/></g>
  <g transform="translate(18.5,148.8) scale(0.88) translate(-18.5,-148.8)"><path d="M18.500 141 L25 144.500 V152.500 L18.500 156.500 L12 152.500 V144.500Z"/><path d="M16.500 145.500 V152 L22.500 149Z M12 152.500 L16.500 152"/></g>
  <g transform="translate(18.5,182) scale(0.88) translate(-18.5,-182)"><rect x="15.500" y="175.500" width="10" height="13" rx="1"/><rect x="11" y="178" width="8.500" height="8.500" rx="1" fill="#0f6030"/><circle cx="15.200" cy="182.200" r="2.200"/><path d="M19.500 183 L25.500 186"/></g>
  <g transform="translate(18.5,215) scale(0.88) translate(-18.5,-215)"><path d="M10.500 210 L26 208.500 L20.500 222 L17.500 216.500Z M17.500 216.500 L26 208.500 M13.500 215.500 L17.500 216.500"/></g>
  <g transform="translate(18.5,248.4) scale(0.88) translate(-18.5,-248.4)"><path d="M18.500 241.500 C21.500 241.500 22.500 244 22.500 246 C24.500 247 25.500 249 24 251 C23 252.500 21 252.500 20 252.500 H17 C16 252.500 14 252.500 13 251 C11.500 249 12.500 247 14.500 246 C14.500 244 15.500 241.500 18.500 241.500Z M17.300 252.500 V255 H19.700 V252.500"/></g>
  <g transform="translate(18.5,281.5) scale(0.95) translate(-18.5,-281.5)" stroke="#1c62c4" stroke-width="1.600"><rect x="14.500" y="277.500" width="5.500" height="5" rx="1.200"/><path d="M19.500 282.500 L22.500 285.500"/></g>
  <path d="M18.500 312 V324 M12.500 318 H24.500" stroke-width="1"/>
  <path d="M6 661.500 H27" stroke="#3f8556" stroke-width="1"/>
  <g transform="translate(18.5,680.2) scale(0.88) translate(-18.5,-680.2)"><rect x="12" y="675" width="13" height="10.500" rx="1.200"/><path d="M21 675 V685.500 M14.500 680.200 H18.500 M17 678.500 L18.700 680.200 L17 682"/></g>
  <g transform="translate(18.5,713.7) scale(0.88) translate(-18.5,-713.7)"><circle cx="18.500" cy="713.500" r="2.300"/><path d="M17.300 707 H19.700 L20.300 709 L22.200 710 L24.200 709.400 L25.400 711.500 L24 713 V714.500 L25.400 716 L24.200 718 L22.200 717.400 L20.300 718.500 L19.700 720.500 H17.300 L16.700 718.500 L14.800 717.400 L12.800 718 L11.600 716 L13 714.500 V713 L11.600 711.500 L12.800 709.400 L14.800 710 L16.700 709Z"/></g>
 </svg>
</div>
</div>
</body></html>
